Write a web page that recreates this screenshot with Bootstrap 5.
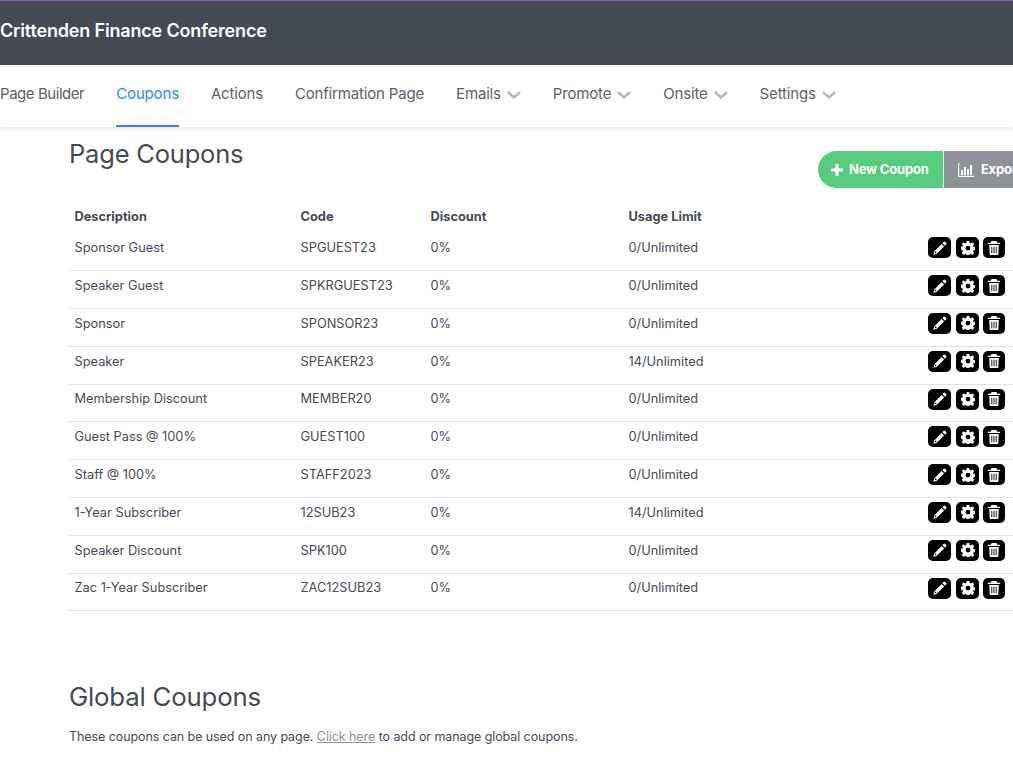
<!DOCTYPE html>
<html lang="en"><head><meta charset="utf-8"><title>Coupons</title>
<link href="https://cdn.jsdelivr.net/npm/bootstrap@5.3.0/dist/css/bootstrap.min.css" rel="stylesheet">
<style>
html,body{height:774px;overflow:hidden}
body{font-family:"Inter","Noto Sans",sans-serif;color:#464a53;background:#fff;width:1013px}
.topband{height:65px;background:#464a53;border-top:1px solid #8a5fb5;color:#fff;font-size:18px;font-weight:600;letter-spacing:-.17px;padding-bottom:6px}
.tabbar{height:62px;box-shadow:0 2px 4px rgba(0,0,0,.1);gap:32px;white-space:nowrap}
.tabitem{height:62px;color:#5b5f69;font-size:15px;letter-spacing:-.17px;text-decoration:none;display:flex;align-items:center;gap:6px;padding-bottom:3px}
.tabitem.firsttab{letter-spacing:-.45px}
.tabitem.current{color:#2f86f2;border-bottom:2px solid #2f86f2;padding-bottom:1px}
.chev{width:14px;height:8px;stroke:#b3b6bd;stroke-width:2.4;fill:none}
.mainarea{padding-left:69px;width:1013px}
.headrow{height:76px}
.pagetitle{font-size:25.500px;font-weight:400;color:#464a53;margin:12px 0 0;letter-spacing:-.2px}
.actions{margin:24px 0 0;flex:none;width:195px}
.greenbtn,.greybtn{height:37px;border:0;color:#fff;font-size:13px;font-weight:700;display:flex;align-items:center;gap:6px;white-space:nowrap;letter-spacing:-.2px;flex:none}
.greenbtn{width:125px;background:#56cc7f;border-radius:19px 0 0 19px;padding-left:13px;margin-right:1px}
.greybtn{width:120px;background:#8f9199;border-radius:0;padding-left:14px;gap:4px}
.coupons{width:944px;margin:0;--bs-table-color:#464a53;font-size:12.800px;table-layout:fixed}
.coupons th{font-weight:700;border:0;padding:0 0 2px 5.500px;height:30px;vertical-align:middle}
.coupons td{padding:0 0 8px 5.500px;height:37.8px;vertical-align:middle;border-bottom:1px solid #dbe4ec}
.coupons td.iconcell{text-align:right;padding:0 8px 8px 0;white-space:nowrap;line-height:1}
.iconbox{display:inline-flex;width:23px;height:21px;background:#000;border-radius:5px;align-items:center;justify-content:center;margin-left:4px;vertical-align:middle}
.iconbox.gearbox{margin-left:5px}
.iconbox.binbox{width:22px}
.iconbox svg{width:14px;height:14px;fill:#fff}
.globaltitle{font-size:25.800px;font-weight:400;margin:71px 0 15px;letter-spacing:-.2px}
.globalnote{font-size:12.500px;margin:0;color:#464a53;letter-spacing:-.08px}
.globalnote a{color:#8f9199}
</style></head><body>
<div class="topband d-flex align-items-center"><span>Crittenden Finance Conference</span></div>
<nav class="tabbar d-flex align-items-center bg-white position-relative">
<a class="tabitem firsttab" href="#">Page Builder</a>
<a class="tabitem current" href="#">Coupons</a>
<a class="tabitem" href="#">Actions</a>
<a class="tabitem" href="#">Confirmation Page</a>
<a class="tabitem" href="#">Emails <svg class="chev" viewBox="0 0 14 8"><path d="M1 1l6 5.5L13 1"/></svg></a>
<a class="tabitem" href="#">Promote <svg class="chev" viewBox="0 0 14 8"><path d="M1 1l6 5.5L13 1"/></svg></a>
<a class="tabitem" href="#">Onsite <svg class="chev" viewBox="0 0 14 8"><path d="M1 1l6 5.5L13 1"/></svg></a>
<a class="tabitem" href="#">Settings <svg class="chev" viewBox="0 0 14 8"><path d="M1 1l6 5.5L13 1"/></svg></a>
</nav>
<main class="mainarea">
<svg width="0" height="0" class="position-absolute"><defs>
<symbol id="pen" viewBox="0 0 16 16"><path d="M12.300.8a1 1 0 0 1 1.400 0l1.500 1.500a1 1 0 0 1 0 1.400l-1.600 1.600-2.900-2.900zM9.800 3.300l2.900 2.900-8.600 8.600-3.700 1 1-3.700zM2.600 11.600l-.6 2.400 2.400-.6z"/></symbol>
<symbol id="gear" viewBox="0 0 16 16"><path fill-rule="evenodd" d="M6.500 0h3l.4 2.200 1.300.6L13 1.500l2.100 2.100-1.300 1.900.6 1.300 2.200.4v3l-2.200.4-.6 1.300 1.300 1.900-2.100 2.100-1.800-1.300-1.300.6-.4 2.200h-3l-.4-2.200-1.300-.6L3 15.900.9 13.800l1.300-1.900-.6-1.300L0 9.700v-3l1.600-.4.600-1.300L.9 3.600 3 1.500l1.800 1.300 1.300-.6zM8 5.300a2.800 2.800 0 1 0 0 5.600 2.800 2.800 0 0 0 0-5.600z"/></symbol>
<symbol id="bin" viewBox="0 0 16 16"><path fill-rule="evenodd" d="M5.200 0h5.600l.9 2H15v1.500H1V2h3.300zM2.500 4.500h11l-.6 10.500a1 1 0 0 1-1 1H4.100a1 1 0 0 1-1-1zM5 6.500v7.500h1V6.500zm2.500 0v7.500h1V6.500zM10 6.500v7.500h1V6.500z"/></symbol>
<symbol id="bars" viewBox="0 0 16 14"><path d="M0 0h1.200v12.800H16V14H0zM3 7h2v5H3zM6 4h2v8H6zM9 6h2v6H9zM12 2h2v10h-2z"/></symbol>
</defs></svg>
<div class="headrow d-flex justify-content-between align-items-start">
<h1 class="pagetitle">Page Coupons</h1>
<div class="actions d-flex">
<button class="greenbtn" type="button"><svg width="12" height="12" viewBox="0 0 12 12" fill="#fff"><path d="M4.500 0h3v4.500H12v3H7.500V12h-3V7.500H0v-3h4.500z"/></svg>New Coupon</button>
<button class="greybtn" type="button"><svg width="16" height="14" fill="#fff"><use href="#bars"/></svg>&nbsp;Export</button>
</div></div>
<table class="table coupons">
<colgroup><col style="width:226px"><col style="width:130px"><col style="width:198px"><col style="width:200px"><col></colgroup>
<thead><tr><th>Description</th><th>Code</th><th>Discount</th><th>Usage Limit</th><th></th></tr></thead>
<tbody id="rows"></tbody></table>
<h2 class="globaltitle">Global Coupons</h2>
<p class="globalnote">These coupons can be used on any page. <a href="#">Click here</a> to add or manage global coupons.</p>
</main>
<script src="https://cdn.jsdelivr.net/npm/bootstrap@5.3.0/dist/js/bootstrap.bundle.min.js"></script>
<script>
const d=[["Sponsor Guest","SPGUEST23","0/Unlimited"],["Speaker Guest","SPKRGUEST23","0/Unlimited"],["Sponsor","SPONSOR23","0/Unlimited"],["Speaker","SPEAKER23","14/Unlimited"],["Membership Discount","MEMBER20","0/Unlimited"],["Guest Pass @ 100%","GUEST100","0/Unlimited"],["Staff @ 100%","STAFF2023","0/Unlimited"],["1-Year Subscriber","12SUB23","14/Unlimited"],["Speaker Discount","SPK100","0/Unlimited"],["Zac 1-Year Subscriber","ZAC12SUB23","0/Unlimited"]];
const ic=(n,c)=>`<span class="iconbox ${c}"><svg><use href="#${n}"/></svg></span>`;
document.getElementById('rows').innerHTML=d.map(r=>`<tr><td>${r[0]}</td><td>${r[1]}</td><td>0%</td><td>${r[2]}</td><td class="iconcell">${ic('pen','')}${ic('gear','gearbox')}${ic('bin','binbox')}</td></tr>`).join('');
</script>
</body></html>
